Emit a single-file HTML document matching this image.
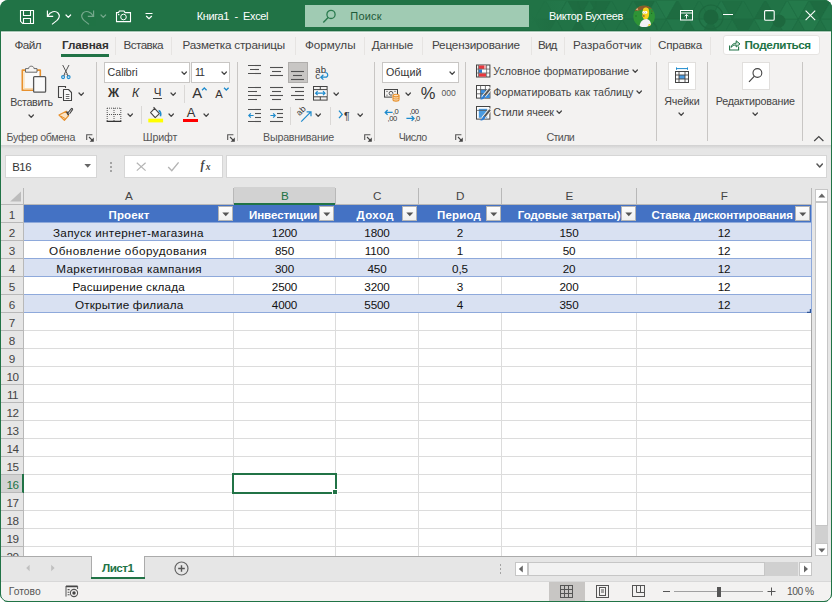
<!DOCTYPE html>
<html lang="ru"><head><meta charset="utf-8"><title>Книга1 - Excel</title>
<style>
html,body{margin:0;padding:0;background:#fff;}
body{width:832px;height:602px;overflow:hidden;position:relative;font-family:"Liberation Sans",sans-serif;}
#win{position:absolute;left:0;top:0;width:832px;height:602px;background:#f3f2f1;border-radius:8px;overflow:hidden;}
.b{position:absolute;display:block;}
.t{position:absolute;white-space:nowrap;line-height:16px;height:16px;color:#444;}

</style></head>
<body>
<div id="win">
<div class="b" style="left:0px;top:0px;width:832px;height:31px;background:#217346;"></div>
<svg class="b" style="left:530px;top:0px" width="302" height="31" viewBox="0 0 302 31" ><polygon points="-39.7,19.3 -28.700000000000003,0.0 -17.700000000000003,19.3" fill="#23774a" stroke="#1f6d42" stroke-width=".5"/><polygon points="-28.700000000000003,0.0 -6.700000000000003,0.0 -17.700000000000003,19.3" fill="#20704400" stroke="#1f6d42" stroke-width=".5"/><polygon points="-17.7,19.3 -6.699999999999999,0.0 4.300000000000001,19.3" fill="#1e6c41" stroke="#1f6d42" stroke-width=".5"/><polygon points="-6.699999999999999,0.0 15.3,0.0 4.300000000000001,19.3" fill="#20704400" stroke="#1f6d42" stroke-width=".5"/><polygon points="4.3,19.3 15.3,0.0 26.3,19.3" fill="#20704400" stroke="#1f6d42" stroke-width=".5"/><polygon points="15.3,0.0 37.3,0.0 26.3,19.3" fill="#23774a" stroke="#1f6d42" stroke-width=".5"/><polygon points="26.3,19.3 37.3,0.0 48.3,19.3" fill="#23774a" stroke="#1f6d42" stroke-width=".5"/><polygon points="37.3,0.0 59.3,0.0 48.3,19.3" fill="#1e6c41" stroke="#1f6d42" stroke-width=".5"/><polygon points="48.3,19.3 59.3,0.0 70.3,19.3" fill="#20704400" stroke="#1f6d42" stroke-width=".5"/><polygon points="59.3,0.0 81.3,0.0 70.3,19.3" fill="#1e6c41" stroke="#1f6d42" stroke-width=".5"/><polygon points="70.3,19.3 81.3,0.0 92.3,19.3" fill="#217346" stroke="#1f6d42" stroke-width=".5"/><polygon points="81.3,0.0 103.3,0.0 92.3,19.3" fill="#217346" stroke="#1f6d42" stroke-width=".5"/><polygon points="92.3,19.3 103.3,0.0 114.3,19.3" fill="#20704400" stroke="#1f6d42" stroke-width=".5"/><polygon points="103.3,0.0 125.3,0.0 114.3,19.3" fill="#1e6c41" stroke="#1f6d42" stroke-width=".5"/><polygon points="114.3,19.3 125.3,0.0 136.3,19.3" fill="#23774a" stroke="#1f6d42" stroke-width=".5"/><polygon points="125.3,0.0 147.3,0.0 136.3,19.3" fill="#247a4b" stroke="#1f6d42" stroke-width=".5"/><polygon points="136.3,19.3 147.3,0.0 158.3,19.3" fill="#1e6c41" stroke="#1f6d42" stroke-width=".5"/><polygon points="147.3,0.0 169.3,0.0 158.3,19.3" fill="#20704400" stroke="#1f6d42" stroke-width=".5"/><polygon points="158.3,19.3 169.3,0.0 180.3,19.3" fill="#217346" stroke="#1f6d42" stroke-width=".5"/><polygon points="169.3,0.0 191.3,0.0 180.3,19.3" fill="#217346" stroke="#1f6d42" stroke-width=".5"/><polygon points="180.3,19.3 191.3,0.0 202.3,19.3" fill="#23774a" stroke="#1f6d42" stroke-width=".5"/><polygon points="191.3,0.0 213.3,0.0 202.3,19.3" fill="#1f6f43" stroke="#1f6d42" stroke-width=".5"/><polygon points="202.3,19.3 213.3,0.0 224.3,19.3" fill="#217346" stroke="#1f6d42" stroke-width=".5"/><polygon points="213.3,0.0 235.3,0.0 224.3,19.3" fill="#217346" stroke="#1f6d42" stroke-width=".5"/><polygon points="224.3,19.3 235.3,0.0 246.3,19.3" fill="#1e6c41" stroke="#1f6d42" stroke-width=".5"/><polygon points="235.3,0.0 257.3,0.0 246.3,19.3" fill="#20704400" stroke="#1f6d42" stroke-width=".5"/><polygon points="246.3,19.3 257.3,0.0 268.3,19.3" fill="#247a4b" stroke="#1f6d42" stroke-width=".5"/><polygon points="257.3,0.0 279.3,0.0 268.3,19.3" fill="#247a4b" stroke="#1f6d42" stroke-width=".5"/><polygon points="268.3,19.3 279.3,0.0 290.3,19.3" fill="#217346" stroke="#1f6d42" stroke-width=".5"/><polygon points="279.3,0.0 301.3,0.0 290.3,19.3" fill="#1e6c41" stroke="#1f6d42" stroke-width=".5"/><polygon points="290.3,19.3 301.3,0.0 312.3,19.3" fill="#23774a" stroke="#1f6d42" stroke-width=".5"/><polygon points="301.3,0.0 323.3,0.0 312.3,19.3" fill="#23774a" stroke="#1f6d42" stroke-width=".5"/><polygon points="312.3,19.3 323.3,0.0 334.3,19.3" fill="#247a4b" stroke="#1f6d42" stroke-width=".5"/><polygon points="323.3,0.0 345.3,0.0 334.3,19.3" fill="#247a4b" stroke="#1f6d42" stroke-width=".5"/><polygon points="-28.7,38.6 -17.7,19.3 -6.699999999999999,38.6" fill="#1e6c41" stroke="#1f6d42" stroke-width=".5"/><polygon points="-17.7,19.3 4.300000000000001,19.3 -6.699999999999999,38.6" fill="#247a4b" stroke="#1f6d42" stroke-width=".5"/><polygon points="-6.699999999999999,38.6 4.300000000000001,19.3 15.3,38.6" fill="#217346" stroke="#1f6d42" stroke-width=".5"/><polygon points="4.300000000000001,19.3 26.3,19.3 15.3,38.6" fill="#1e6c41" stroke="#1f6d42" stroke-width=".5"/><polygon points="15.3,38.6 26.3,19.3 37.3,38.6" fill="#217346" stroke="#1f6d42" stroke-width=".5"/><polygon points="26.3,19.3 48.3,19.3 37.3,38.6" fill="#20704400" stroke="#1f6d42" stroke-width=".5"/><polygon points="37.3,38.6 48.3,19.3 59.3,38.6" fill="#1e6c41" stroke="#1f6d42" stroke-width=".5"/><polygon points="48.3,19.3 70.3,19.3 59.3,38.6" fill="#217346" stroke="#1f6d42" stroke-width=".5"/><polygon points="59.3,38.6 70.3,19.3 81.3,38.6" fill="#217346" stroke="#1f6d42" stroke-width=".5"/><polygon points="70.3,19.3 92.3,19.3 81.3,38.6" fill="#217346" stroke="#1f6d42" stroke-width=".5"/><polygon points="81.3,38.6 92.3,19.3 103.3,38.6" fill="#217346" stroke="#1f6d42" stroke-width=".5"/><polygon points="92.3,19.3 114.3,19.3 103.3,38.6" fill="#217346" stroke="#1f6d42" stroke-width=".5"/><polygon points="103.3,38.6 114.3,19.3 125.3,38.6" fill="#1e6c41" stroke="#1f6d42" stroke-width=".5"/><polygon points="114.3,19.3 136.3,19.3 125.3,38.6" fill="#217346" stroke="#1f6d42" stroke-width=".5"/><polygon points="125.3,38.6 136.3,19.3 147.3,38.6" fill="#20704400" stroke="#1f6d42" stroke-width=".5"/><polygon points="136.3,19.3 158.3,19.3 147.3,38.6" fill="#23774a" stroke="#1f6d42" stroke-width=".5"/><polygon points="147.3,38.6 158.3,19.3 169.3,38.6" fill="#1f6f43" stroke="#1f6d42" stroke-width=".5"/><polygon points="158.3,19.3 180.3,19.3 169.3,38.6" fill="#23774a" stroke="#1f6d42" stroke-width=".5"/><polygon points="169.3,38.6 180.3,19.3 191.3,38.6" fill="#1e6c41" stroke="#1f6d42" stroke-width=".5"/><polygon points="180.3,19.3 202.3,19.3 191.3,38.6" fill="#20704400" stroke="#1f6d42" stroke-width=".5"/><polygon points="191.3,38.6 202.3,19.3 213.3,38.6" fill="#217346" stroke="#1f6d42" stroke-width=".5"/><polygon points="202.3,19.3 224.3,19.3 213.3,38.6" fill="#1e6c41" stroke="#1f6d42" stroke-width=".5"/><polygon points="213.3,38.6 224.3,19.3 235.3,38.6" fill="#217346" stroke="#1f6d42" stroke-width=".5"/><polygon points="224.3,19.3 246.3,19.3 235.3,38.6" fill="#247a4b" stroke="#1f6d42" stroke-width=".5"/><polygon points="235.3,38.6 246.3,19.3 257.3,38.6" fill="#1f6f43" stroke="#1f6d42" stroke-width=".5"/><polygon points="246.3,19.3 268.3,19.3 257.3,38.6" fill="#23774a" stroke="#1f6d42" stroke-width=".5"/><polygon points="257.3,38.6 268.3,19.3 279.3,38.6" fill="#217346" stroke="#1f6d42" stroke-width=".5"/><polygon points="268.3,19.3 290.3,19.3 279.3,38.6" fill="#247a4b" stroke="#1f6d42" stroke-width=".5"/><polygon points="279.3,38.6 290.3,19.3 301.3,38.6" fill="#217346" stroke="#1f6d42" stroke-width=".5"/><polygon points="290.3,19.3 312.3,19.3 301.3,38.6" fill="#23774a" stroke="#1f6d42" stroke-width=".5"/><polygon points="301.3,38.6 312.3,19.3 323.3,38.6" fill="#247a4b" stroke="#1f6d42" stroke-width=".5"/><polygon points="312.3,19.3 334.3,19.3 323.3,38.6" fill="#1f6f43" stroke="#1f6d42" stroke-width=".5"/><polygon points="323.3,38.6 334.3,19.3 345.3,38.6" fill="#23774a" stroke="#1f6d42" stroke-width=".5"/><polygon points="334.3,19.3 356.3,19.3 345.3,38.6" fill="#1e6c41" stroke="#1f6d42" stroke-width=".5"/><circle cx="181" cy="17" r="7.5" fill="#1c663d"/><circle cx="181" cy="17" r="12" fill="none" stroke="#1d693f" stroke-width="1.2"/><circle cx="249" cy="21" r="6.5" fill="#1d683e"/><circle cx="57" cy="3" r="9" fill="none" stroke="#1e6b40" stroke-width="1.5"/><circle cx="118" cy="30" r="9" fill="none" stroke="#1e6b40" stroke-width="1.5"/><linearGradient id="fd" x1="0" x2="1" y1="0" y2="0"><stop offset="0" stop-color="#217346" stop-opacity="1"/><stop offset=".12" stop-color="#217346" stop-opacity="0"/></linearGradient><rect width="302" height="31" fill="url(#fd)"/></svg>
<div class="b" style="left:0px;top:30px;width:832px;height:1px;background:#1d6b40;"></div>
<div class="b" style="left:1px;top:31px;width:830px;height:1px;background:#a9c7b6;"></div>
<div class="b" style="left:1px;top:32px;width:830px;height:1px;background:#f9f9f8;"></div>
<div class="b" style="left:0px;top:31px;width:1px;height:571px;background:#217346;"></div>
<div class="b" style="left:831px;top:31px;width:1px;height:571px;background:#217346;"></div>
<div class="b" style="left:0px;top:601px;width:832px;height:1px;background:#217346;"></div>
<svg class="b" style="left:19px;top:9px" width="17" height="16" viewBox="0 0 17 16" ><path d="M1.5 1.5 H14.5 V14.5 H3.7 L1.5 12.3 Z" fill="none" stroke="#fff" stroke-width="1.1"/>
<path d="M4.5 1.5 V6.5 H11.5 V1.5" fill="none" stroke="#fff" stroke-width="1.1"/>
<path d="M4.5 14.5 V9.5 H11.5 V14.5" fill="none" stroke="#fff" stroke-width="1.1"/></svg>
<svg class="b" style="left:45px;top:9px" width="17" height="17" viewBox="0 0 17 17" ><path d="M2.4 1.6 V7.4 H8.2" fill="none" stroke="#fff" stroke-width="1.15"/>
<path d="M2.8 7 C5.2 2.6 10.2 1.2 13 4 C15.4 6.6 14.2 9.4 12 11.4 L7 15.4" fill="none" stroke="#fff" stroke-width="1.15"/></svg>
<svg class="b" style="left:65.2px;top:14.0px" width="6.6" height="4.4" viewBox="0 0 6.6 4.4" ><path d="M1 1 L3.3 3.4 L5.6 1" fill="none" stroke="#fff" stroke-width="1.2" stroke-linecap="round" stroke-linejoin="round"/></svg>
<svg class="b" style="left:79px;top:9px" width="17" height="17" viewBox="0 0 17 17" ><g opacity=".38"><path d="M14.6 1.6 V7.4 H8.8" fill="none" stroke="#fff" stroke-width="1.15"/>
<path d="M14.2 7 C11.8 2.6 6.8 1.2 4 4 C1.6 6.6 2.8 9.4 5 11.4 L10 15.4" fill="none" stroke="#fff" stroke-width="1.15"/></g></svg>
<svg class="b" style="left:100.2px;top:14.0px" width="6.6" height="4.4" viewBox="0 0 6.6 4.4" ><path d="M1 1 L3.3 3.4 L5.6 1" fill="none" stroke="rgba(255,255,255,.38)" stroke-width="1.2" stroke-linecap="round" stroke-linejoin="round"/></svg>
<svg class="b" style="left:115px;top:10px" width="17" height="13" viewBox="0 0 17 13" ><path d="M1.5 2.6 H3.4 L4.4 1 H9 L10 2.6 H15.5 V11.6 H1.5 Z" fill="none" stroke="#fff" stroke-width="1.1"/>
<circle cx="8.5" cy="7" r="2.8" fill="none" stroke="#fff" stroke-width="1"/><rect x="3" y="4" width="1.4" height="1.2" fill="#fff"/></svg>
<svg class="b" style="left:144px;top:12px" width="10" height="8" viewBox="0 0 10 8" ><path d="M1.5 1.5 H8.5" stroke="#fff" stroke-width="1.1"/><path d="M2.2 4 L5 6.6 L7.8 4" fill="none" stroke="#fff" stroke-width="1.2"/></svg>
<div class="t " style="top:8px;font-size:11px;color:#fff;letter-spacing:-0.376px;left:196.7px;white-space:pre;"><span id="t1">Книга1  -  Excel</span></div>
<div class="b" style="left:305px;top:5px;width:224px;height:22px;background:#a0cbb3;"></div>
<svg class="b" style="left:322px;top:9px" width="15" height="15" viewBox="0 0 15 15" ><circle cx="9" cy="5.4" r="4.1" fill="none" stroke="#2a7a4e" stroke-width="1.3"/><path d="M6.2 8.4 L1.3 13.4" stroke="#2a7a4e" stroke-width="1.4"/></svg>
<div class="t " style="top:8px;font-size:11px;color:#1e5a39;letter-spacing:0.203px;left:350.3px;"><span id="t2">Поиск</span></div>
<div class="t " style="top:8px;font-size:11px;color:#fff;letter-spacing:-0.391px;left:549px;"><span id="t3">Виктор Бухтеев</span></div>
<svg class="b" style="left:633px;top:5px" width="23" height="23" viewBox="0 0 23 23" ><defs><clipPath id="av"><circle cx="11.1" cy="11.3" r="10.8"/></clipPath></defs>
<g clip-path="url(#av)"><rect width="23" height="23" fill="#2f9436"/>
<path d="M0 0 H23 V4.6 C18 2.6 12 3.4 8 5 C5 6.2 2 5.6 0 6.4Z" fill="#8a5a2b"/>
<path d="M2 4.4 L4.4 2.6 L5.4 5.4Z" fill="#d9a77a"/>
<circle cx="3" cy="11" r=".7" fill="#1f6b25"/><circle cx="18.6" cy="8.4" r=".6" fill="#1f6b25"/><circle cx="19" cy="6" r=".5" fill="#7a3a1a"/>
<path d="M6.4 22.4 C6.6 17.6 9.4 14.2 12.6 14 C16.4 13.8 18.6 17 18 22.4Z" fill="#f1f0f4"/>
<path d="M15.4 19.4 C17 18.6 18.4 19.4 17.8 21 C17.2 22 15.8 22 15.2 21.4Z" fill="#f6cf1f"/>
<path d="M10.4 3.6 C11.4 2 14.8 2 15.6 4 C16.4 6 16.4 9.6 15.6 12 C15 13.6 13.4 14.4 12 14.2 C10.6 14 9.8 13 9.8 12 C8.8 11.6 8.6 10.4 9.6 9.6 C9.6 7.6 9.6 5.2 10.4 3.6Z" fill="#f8d21c"/>
<path d="M9.4 10.2 C10.4 9.6 11.8 10 12 11.2 C11.4 12.2 10 12.2 9.4 11.6Z" fill="#a8783a"/>
<circle cx="10.6" cy="7.4" r="1.3" fill="#fff"/><circle cx="13" cy="7.4" r="1.4" fill="#fff"/>
<circle cx="10.2" cy="7.5" r=".35" fill="#222"/><circle cx="12.6" cy="7.5" r=".35" fill="#222"/>
</g></svg>
<svg class="b" style="left:680px;top:10px" width="13" height="11" viewBox="0 0 13 11" ><rect x=".5" y=".5" width="12" height="9.5" fill="none" stroke="#fff" stroke-width="1"/><path d="M.5 3 H12.5" stroke="#fff" stroke-width="1"/>
<path d="M6.5 8.6 V4.6 M4.6 6.3 L6.5 4.4 L8.4 6.3" fill="none" stroke="#fff" stroke-width="1"/></svg>
<div class="b" style="left:723px;top:14px;width:10px;height:1px;background:#fff;"></div>
<svg class="b" style="left:764px;top:10px" width="11" height="11" viewBox="0 0 11 11" ><rect x=".6" y=".6" width="9.6" height="9.6" rx="1" fill="none" stroke="#fff" stroke-width="1.1"/></svg>
<svg class="b" style="left:805px;top:10px" width="11" height="11" viewBox="0 0 11 11" ><path d="M.6 .6 L10.2 10.2 M10.2 .6 L.6 10.2" stroke="#fff" stroke-width="1.1"/></svg>
<div class="t " style="top:37px;font-size:11.7px;letter-spacing:-0.581px;left:14.5px;"><span id="t4">Файл</span></div>
<div class="t " style="top:37px;font-size:11.7px;color:#333;font-weight:700;letter-spacing:-0.128px;left:62px;"><span id="t5">Главная</span></div>
<div class="b" style="left:61px;top:54px;width:48px;height:3px;background:#217346;"></div>
<div class="t " style="top:37px;font-size:11.7px;letter-spacing:-0.577px;left:123.5px;"><span id="t6">Вставка</span></div>
<div class="t " style="top:37px;font-size:11.7px;letter-spacing:-0.214px;left:182.5px;"><span id="t7">Разметка страницы</span></div>
<div class="t " style="top:37px;font-size:11.7px;letter-spacing:-0.055px;left:305px;"><span id="t8">Формулы</span></div>
<div class="t " style="top:37px;font-size:11.7px;letter-spacing:-0.134px;left:371.7px;"><span id="t9">Данные</span></div>
<div class="t " style="top:37px;font-size:11.7px;letter-spacing:-0.167px;left:432px;"><span id="t10">Рецензирование</span></div>
<div class="t " style="top:37px;font-size:11.7px;letter-spacing:-0.863px;left:538px;"><span id="t11">Вид</span></div>
<div class="t " style="top:37px;font-size:11.7px;letter-spacing:0.052px;left:573px;"><span id="t12">Разработчик</span></div>
<div class="t " style="top:37px;font-size:11.7px;letter-spacing:-0.286px;left:658px;"><span id="t13">Справка</span></div>
<div class="b" style="left:115px;top:37px;width:1px;height:18px;background:#e6e4e2;"></div>
<div class="b" style="left:171px;top:37px;width:1px;height:18px;background:#e6e4e2;"></div>
<div class="b" style="left:295px;top:37px;width:1px;height:18px;background:#e6e4e2;"></div>
<div class="b" style="left:364px;top:37px;width:1px;height:18px;background:#e6e4e2;"></div>
<div class="b" style="left:422px;top:37px;width:1px;height:18px;background:#e6e4e2;"></div>
<div class="b" style="left:530.5px;top:37px;width:1px;height:18px;background:#e6e4e2;"></div>
<div class="b" style="left:564px;top:37px;width:1px;height:18px;background:#e6e4e2;"></div>
<div class="b" style="left:650px;top:37px;width:1px;height:18px;background:#e6e4e2;"></div>
<div class="b" style="left:710px;top:37px;width:1px;height:18px;background:#e6e4e2;"></div>
<div class="b" style="left:723px;top:35px;width:95px;height:18px;background:#fff;border:1px solid #e6e4e2;border-radius:3px;"></div>
<svg class="b" style="left:728px;top:39px" width="14" height="13" viewBox="0 0 14 13" ><path d="M1.6 6.4 V11 H10.6 V7.6" fill="none" stroke="#217346" stroke-width="1.1"/>
<path d="M3 8.4 C3.6 5.6 5.6 4.2 8.2 4.2 V1.8 L12 4.9 L8.2 8 V6 C6 6 4.4 6.8 3 8.4Z" fill="#cfe3d7" stroke="#217346" stroke-width="1" stroke-linejoin="round"/></svg>
<div class="t " style="top:37px;font-size:11.7px;color:#217346;font-weight:700;letter-spacing:-0.395px;left:744.6px;"><span id="t14">Поделиться</span></div>
<div class="b" style="left:96px;top:62px;width:1px;height:79px;background:#c8c6c4;"></div>
<div class="b" style="left:237px;top:62px;width:1px;height:79px;background:#c8c6c4;"></div>
<div class="b" style="left:374px;top:62px;width:1px;height:79px;background:#c8c6c4;"></div>
<div class="b" style="left:465px;top:62px;width:1px;height:79px;background:#c8c6c4;"></div>
<div class="b" style="left:656px;top:62px;width:1px;height:79px;background:#c8c6c4;"></div>
<div class="b" style="left:707px;top:62px;width:1px;height:79px;background:#c8c6c4;"></div>
<div class="b" style="left:802px;top:62px;width:1px;height:79px;background:#c8c6c4;"></div>
<svg class="b" style="left:20px;top:64px" width="28" height="30" viewBox="0 0 28 30" >
<path d="M5.5 6.2 H2.4 V26.2 H13" fill="#fafafa" stroke="#e8912d" stroke-width="1.8" stroke-linejoin="round"/>
<path d="M16.5 6.2 H20.2 V12" fill="none" stroke="#e8912d" stroke-width="1.8" stroke-linejoin="round"/>
<path d="M3.3 7 H19.3 V25.3 H3.3Z" fill="#fafafa"/>
<path d="M4 7 V24.6 H13" fill="none" stroke="#fbdcae" stroke-width="1.2"/>
<path d="M5.5 8.2 V4.6 H8.6 C8.6 1.4 14 1.4 14 4.6 H17 V8.2 Z" fill="#f6f5f4" stroke="#6a6a6a" stroke-width="1" stroke-linejoin="round"/>
<rect x="13.6" y="12.6" width="12" height="15.6" rx="1" fill="#fafafa" stroke="#555" stroke-width="1.3"/></svg>
<div class="t " style="top:94px;font-size:10.7px;letter-spacing:-0.348px;left:10.3px;"><span id="t15">Вставить</span></div>
<svg class="b" style="left:27.8px;top:114.3px" width="6.4" height="4.4" viewBox="0 0 6.4 4.4" ><path d="M1 1 L3.2 3.4 L5.4 1" fill="none" stroke="#444" stroke-width="1.25" stroke-linecap="round" stroke-linejoin="round"/></svg>
<svg class="b" style="left:60px;top:64px" width="12" height="16" viewBox="0 0 12 16" ><path d="M2.7 1 L7.6 10.6 M9 1 L4.1 10.6" stroke="#555" stroke-width="1" fill="none"/>
<circle cx="3.1" cy="13.1" r="1.5" fill="#cfe6f7" stroke="#1e8bcd" stroke-width="1.1"/><circle cx="8.6" cy="13.1" r="1.5" fill="#cfe6f7" stroke="#1e8bcd" stroke-width="1.1"/>
<path d="M4 11.8 L5 10 M7.7 11.8 L6.7 10" stroke="#555" stroke-width="1"/></svg>
<svg class="b" style="left:57px;top:85px" width="17" height="17" viewBox="0 0 17 17" ><path d="M5 12.5 H1.5 V1.5 H8.5 V3" fill="none" stroke="#444" stroke-width="1.1"/>
<path d="M6.5 4.5 H11.5 L14.5 7.5 V15.5 H6.5Z" fill="#fafafa" stroke="#444" stroke-width="1.1" stroke-linejoin="round"/>
<path d="M8.8 9.5 H12.4 M8.8 11.5 H12.4 M8.8 13.5 H12.4" stroke="#444" stroke-width=".8"/></svg>
<svg class="b" style="left:78.1px;top:91.6px" width="6.4" height="4.4" viewBox="0 0 6.4 4.4" ><path d="M1 1 L3.2 3.4 L5.4 1" fill="none" stroke="#444" stroke-width="1.25" stroke-linecap="round" stroke-linejoin="round"/></svg>
<svg class="b" style="left:58px;top:107px" width="16" height="15" viewBox="0 0 16 15" ><path d="M1 8 L8.2 4.2 L10.6 8.6 L6.4 13.4 Z" fill="#fbe3c4" stroke="#e8912d" stroke-width="1.2" stroke-linejoin="round"/>
<path d="M3 9.2 L8 12" stroke="#e8912d" stroke-width="1"/>
<path d="M8.6 4.6 L10.6 8.2" stroke="#444" stroke-width="1.6"/>
<path d="M9.8 6 L13.4 1.6 C14 1 15 1.8 14.5 2.6 L11.6 6.8" fill="none" stroke="#444" stroke-width="1.1"/></svg>
<div class="t " style="top:129px;font-size:10.7px;color:#555;letter-spacing:-0.350px;left:6.6px;"><span id="t16">Буфер обмена</span></div>
<svg class="b" style="left:86px;top:133.6px" width="9" height="9" viewBox="0 0 9 9" ><path d="M.7 6 V.7 H6.4" fill="none" stroke="#555" stroke-width="1.1"/><path d="M3 3 L6.6 6.6" fill="none" stroke="#444" stroke-width="1.1"/><path d="M7.8 3.6 V7.8 H3.6Z" fill="#444"/></svg>
<div class="b" style="left:104px;top:62px;width:84px;height:19px;background:#fff;border:1px solid #c8c6c4;"></div>
<div class="t " style="top:64px;font-size:10.7px;color:#333;letter-spacing:-0.046px;left:107.6px;"><span id="t17">Calibri</span></div>
<svg class="b" style="left:180.6px;top:70.8px" width="6.4" height="4.4" viewBox="0 0 6.4 4.4" ><path d="M1 1 L3.2 3.4 L5.4 1" fill="none" stroke="#444" stroke-width="1.25" stroke-linecap="round" stroke-linejoin="round"/></svg>
<div class="b" style="left:191px;top:62px;width:37px;height:19px;background:#fff;border:1px solid #c8c6c4;"></div>
<div class="t " style="top:64px;font-size:10.7px;color:#333;letter-spacing:-1.196px;left:195px;"><span id="t18">11</span></div>
<svg class="b" style="left:221.1px;top:70.8px" width="6.4" height="4.4" viewBox="0 0 6.4 4.4" ><path d="M1 1 L3.2 3.4 L5.4 1" fill="none" stroke="#444" stroke-width="1.25" stroke-linecap="round" stroke-linejoin="round"/></svg>
<div class="t " style="top:85px;font-size:12.2px;color:#333;font-weight:700;letter-spacing:1.384px;left:108.1px;"><span id="t19">Ж</span></div>
<div class="t " style="top:85px;font-size:12.2px;color:#333;letter-spacing:0.012px;left:132px;font-style:italic;"><span id="t20">К</span></div>
<div class="t " style="top:84px;font-size:11.6px;color:#333;letter-spacing:-0.134px;left:153.8px;"><span id="t21">Ч</span></div>
<div class="b" style="left:153px;top:98.3px;width:9px;height:1px;background:#444;"></div>
<svg class="b" style="left:169.8px;top:91.6px" width="6.4" height="4.4" viewBox="0 0 6.4 4.4" ><path d="M1 1 L3.2 3.4 L5.4 1" fill="none" stroke="#444" stroke-width="1.25" stroke-linecap="round" stroke-linejoin="round"/></svg>
<div class="b" style="left:184px;top:85px;width:1px;height:18px;background:#dad8d6;"></div>
<div class="t " style="top:85px;font-size:14.8px;color:#333;letter-spacing:0.225px;left:192.2px;"><span id="t22">A</span></div>
<svg class="b" style="left:201px;top:87px" width="7" height="4" viewBox="0 0 7 4" ><path d="M1 3.2 L3.3 1 L5.6 3.2" fill="none" stroke="#1e8bcd" stroke-width="1.3"/></svg>
<div class="t " style="top:86px;font-size:11.2px;color:#333;letter-spacing:0.931px;left:215.3px;"><span id="t23">A</span></div>
<svg class="b" style="left:222.5px;top:87px" width="7" height="4" viewBox="0 0 7 4" ><path d="M1 .8 L3.3 3 L5.6 .8" fill="none" stroke="#1e8bcd" stroke-width="1.3"/></svg>
<svg class="b" style="left:106px;top:107px" width="16" height="16" viewBox="0 0 16 16" ><path d="M1 1.2 H15 M1.2 1 V14 M14.8 1 V14 M8 1 V14 M1 7.5 H15" stroke="#555" stroke-width="1" stroke-dasharray="1 1" fill="none"/>
<path d="M.6 14.4 H15.4" stroke="#333" stroke-width="1.3"/></svg>
<svg class="b" style="left:126.8px;top:113.3px" width="6.4" height="4.4" viewBox="0 0 6.4 4.4" ><path d="M1 1 L3.2 3.4 L5.4 1" fill="none" stroke="#444" stroke-width="1.25" stroke-linecap="round" stroke-linejoin="round"/></svg>
<div class="b" style="left:141px;top:106px;width:1px;height:18px;background:#dad8d6;"></div>
<svg class="b" style="left:148px;top:106px" width="16" height="18" viewBox="0 0 16 18" ><path d="M6.6 2.4 L11.4 7.6 L7.2 11.6 L2.6 6.6 Z" fill="#fafafa" stroke="#444" stroke-width="1.1" stroke-linejoin="round"/>
<path d="M6.8 2.6 L5.6 1.2" stroke="#444" stroke-width="1.1"/>
<path d="M10.6 4.6 C12.8 5.4 13.2 8 12.4 10.2" fill="none" stroke="#1e8bcd" stroke-width="1.6"/>
<rect x=".3" y="12.7" width="14.8" height="3.7" fill="#ffff00"/></svg>
<svg class="b" style="left:168.3px;top:113.3px" width="6.4" height="4.4" viewBox="0 0 6.4 4.4" ><path d="M1 1 L3.2 3.4 L5.4 1" fill="none" stroke="#444" stroke-width="1.25" stroke-linecap="round" stroke-linejoin="round"/></svg>
<div class="t " style="top:105px;font-size:13px;color:#333;letter-spacing:-0.072px;left:186.7px;"><span id="t24">A</span></div>
<div class="b" style="left:183.3px;top:118.7px;width:14.7px;height:3.7px;background:#ff0000;"></div>
<svg class="b" style="left:203.3px;top:113.3px" width="6.4" height="4.4" viewBox="0 0 6.4 4.4" ><path d="M1 1 L3.2 3.4 L5.4 1" fill="none" stroke="#444" stroke-width="1.25" stroke-linecap="round" stroke-linejoin="round"/></svg>
<div class="t " style="top:129px;font-size:10.7px;color:#555;letter-spacing:-0.172px;left:142.8px;"><span id="t25">Шрифт</span></div>
<svg class="b" style="left:226.5px;top:133.6px" width="9" height="9" viewBox="0 0 9 9" ><path d="M.7 6 V.7 H6.4" fill="none" stroke="#555" stroke-width="1.1"/><path d="M3 3 L6.6 6.6" fill="none" stroke="#444" stroke-width="1.1"/><path d="M7.8 3.6 V7.8 H3.6Z" fill="#444"/></svg>
<svg class="b" style="left:248px;top:62px" width="14" height="21" viewBox="0 0 14 21" ><path d="M0 3.5 H13" stroke="#505050" stroke-width="1.1"/><path d="M2 7.5 H11" stroke="#505050" stroke-width="1.1"/><path d="M0 11.5 H13" stroke="#505050" stroke-width="1.1"/></svg>
<svg class="b" style="left:269.6px;top:62px" width="14" height="21" viewBox="0 0 14 21" ><path d="M0 5.5 H13" stroke="#505050" stroke-width="1.1"/><path d="M2 9.5 H11" stroke="#505050" stroke-width="1.1"/><path d="M0 13.5 H13" stroke="#505050" stroke-width="1.1"/></svg>
<div class="b" style="left:288px;top:62px;width:18px;height:19px;background:#c8c6c4;border:1px solid #b0aeac;"></div>
<svg class="b" style="left:291px;top:62px" width="14" height="21" viewBox="0 0 14 21" ><path d="M0 9.5 H13" stroke="#505050" stroke-width="1.1"/><path d="M2 13.5 H11" stroke="#505050" stroke-width="1.1"/><path d="M0 17.5 H13" stroke="#505050" stroke-width="1.1"/></svg>
<div class="t " style="top:62px;font-size:9.5px;color:#333;letter-spacing:0.281px;left:315.2px;"><span id="t26">ab</span></div>
<div class="t " style="top:68px;font-size:9.5px;color:#333;letter-spacing:-0.350px;left:315.2px;"><span id="t27">c</span></div>
<svg class="b" style="left:319px;top:72px" width="10" height="8" viewBox="0 0 10 8" ><path d="M6.2 .5 C9.6 .8 9.6 5.2 6.4 5.2 H2.2 M4.4 2.8 L1.8 5.2 L4.4 7.6" fill="none" stroke="#1e8bcd" stroke-width="1.2"/></svg>
<svg class="b" style="left:248px;top:85px" width="14" height="17" viewBox="0 0 14 17" ><path d="M0 2.5 H13" stroke="#505050" stroke-width="1.1"/><path d="M0 6.5 H9" stroke="#505050" stroke-width="1.1"/><path d="M0 10.5 H13" stroke="#505050" stroke-width="1.1"/><path d="M0 14.5 H9" stroke="#505050" stroke-width="1.1"/></svg>
<svg class="b" style="left:269.6px;top:85px" width="14" height="17" viewBox="0 0 14 17" ><path d="M0 2.5 H13" stroke="#505050" stroke-width="1.1"/><path d="M2 6.5 H11" stroke="#505050" stroke-width="1.1"/><path d="M0 10.5 H13" stroke="#505050" stroke-width="1.1"/><path d="M2 14.5 H11" stroke="#505050" stroke-width="1.1"/></svg>
<svg class="b" style="left:291px;top:85px" width="14" height="17" viewBox="0 0 14 17" ><path d="M0 2.5 H13" stroke="#505050" stroke-width="1.1"/><path d="M4 6.5 H13" stroke="#505050" stroke-width="1.1"/><path d="M0 10.5 H13" stroke="#505050" stroke-width="1.1"/><path d="M4 14.5 H13" stroke="#505050" stroke-width="1.1"/></svg>
<svg class="b" style="left:313px;top:86px" width="15" height="15" viewBox="0 0 15 15" ><rect x=".5" y=".5" width="13.6" height="13.6" fill="none" stroke="#444" stroke-width="1"/>
<rect x="1" y="4" width="12.6" height="6.6" fill="#fafafa"/>
<path d="M.5 3.6 H14 M.5 10.8 H14 M7.3 .5 V3.6 M7.3 10.8 V14" stroke="#444" stroke-width="1"/>
<path d="M2.6 7.2 H12 M4.6 5.2 L2.6 7.2 L4.6 9.2 M10 5.2 L12 7.2 L10 9.2" fill="none" stroke="#1e8bcd" stroke-width="1.2"/></svg>
<svg class="b" style="left:332.6px;top:91.6px" width="6.4" height="4.4" viewBox="0 0 6.4 4.4" ><path d="M1 1 L3.2 3.4 L5.4 1" fill="none" stroke="#444" stroke-width="1.25" stroke-linecap="round" stroke-linejoin="round"/></svg>
<svg class="b" style="left:248px;top:107px" width="14" height="17" viewBox="0 0 14 17" ><path d="M0 2.5 H13" stroke="#505050" stroke-width="1.1"/><path d="M7 6.5 H13" stroke="#505050" stroke-width="1.1"/><path d="M7 10.5 H13" stroke="#505050" stroke-width="1.1"/><path d="M0 14.5 H13" stroke="#505050" stroke-width="1.1"/><path d="M.8 8.5 H5.6 M2.8 6.4 L.8 8.5 L2.8 10.6" fill="none" stroke="#1e8bcd" stroke-width="1.2"/></svg>
<svg class="b" style="left:269.6px;top:107px" width="14" height="17" viewBox="0 0 14 17" ><path d="M0 2.5 H13" stroke="#505050" stroke-width="1.1"/><path d="M7 6.5 H13" stroke="#505050" stroke-width="1.1"/><path d="M7 10.5 H13" stroke="#505050" stroke-width="1.1"/><path d="M0 14.5 H13" stroke="#505050" stroke-width="1.1"/><path d="M.4 8.5 H5.2 M3.2 6.4 L5.2 8.5 L3.2 10.6" fill="none" stroke="#1e8bcd" stroke-width="1.2"/></svg>
<div class="b" style="left:290px;top:107px;width:1px;height:18px;background:#dad8d6;"></div>
<svg class="b" style="left:296px;top:105px" width="17" height="18" viewBox="0 0 17 18" ><text x="0" y="0" transform="translate(3.6,11.2) rotate(-45)" font-size="8.6" fill="#333" font-family="Liberation Sans, sans-serif">ab</text>
<path d="M5.2 16.6 L14.6 7.2 M10.6 6.8 H15 V11.2" fill="none" stroke="#1e8bcd" stroke-width="1.2"/></svg>
<svg class="b" style="left:314.6px;top:113.3px" width="6.4" height="4.4" viewBox="0 0 6.4 4.4" ><path d="M1 1 L3.2 3.4 L5.4 1" fill="none" stroke="#444" stroke-width="1.25" stroke-linecap="round" stroke-linejoin="round"/></svg>
<div class="b" style="left:330px;top:107px;width:1px;height:18px;background:#dad8d6;"></div>
<svg class="b" style="left:338px;top:109px" width="14" height="12" viewBox="0 0 14 12" ><path d="M1 1.6 L4.2 5.4 L1 9.2" fill="none" stroke="#1e8bcd" stroke-width="1.3"/></svg>
<div class="t " style="top:108px;font-size:10.5px;color:#333;letter-spacing:0.759px;left:344px;"><span id="t28">¶</span></div>
<svg class="b" style="left:357.1px;top:113.3px" width="6.4" height="4.4" viewBox="0 0 6.4 4.4" ><path d="M1 1 L3.2 3.4 L5.4 1" fill="none" stroke="#444" stroke-width="1.25" stroke-linecap="round" stroke-linejoin="round"/></svg>
<div class="t " style="top:129px;font-size:10.7px;color:#555;letter-spacing:-0.207px;left:263px;"><span id="t29">Выравнивание</span></div>
<svg class="b" style="left:364px;top:133.6px" width="9" height="9" viewBox="0 0 9 9" ><path d="M.7 6 V.7 H6.4" fill="none" stroke="#555" stroke-width="1.1"/><path d="M3 3 L6.6 6.6" fill="none" stroke="#444" stroke-width="1.1"/><path d="M7.8 3.6 V7.8 H3.6Z" fill="#444"/></svg>
<div class="b" style="left:382px;top:62px;width:75px;height:19px;background:#fff;border:1px solid #c8c6c4;"></div>
<div class="t " style="top:64px;font-size:10.7px;color:#333;letter-spacing:0.095px;left:385.9px;"><span id="t30">Общий</span></div>
<svg class="b" style="left:449.3px;top:70.8px" width="6.4" height="4.4" viewBox="0 0 6.4 4.4" ><path d="M1 1 L3.2 3.4 L5.4 1" fill="none" stroke="#444" stroke-width="1.25" stroke-linecap="round" stroke-linejoin="round"/></svg>
<svg class="b" style="left:384px;top:89px" width="17" height="13" viewBox="0 0 17 13" ><rect x=".5" y=".5" width="13" height="7.6" fill="none" stroke="#444" stroke-width="1"/>
<circle cx="7" cy="4.3" r="1.9" fill="none" stroke="#444" stroke-width=".9"/><path d="M2.4 2.4 H3.6 M10.4 2.4 H11.6 M2.4 6.2 H3.6" stroke="#444" stroke-width=".9"/>
<rect x="8.2" y="5.2" width="7.4" height="7" fill="#f3f2f1"/>
<path d="M9 6.6 V10.8 C9 12.6 15 12.6 15 10.8 V6.6" fill="#fbe3c4" stroke="#e8912d" stroke-width="1.1"/>
<ellipse cx="12" cy="6.6" rx="3" ry="1.3" fill="#fbe3c4" stroke="#e8912d" stroke-width="1.1"/><path d="M9 8.8 C9 10.4 15 10.4 15 8.8" fill="none" stroke="#e8912d" stroke-width="1"/></svg>
<svg class="b" style="left:405.0px;top:91.6px" width="6.4" height="4.4" viewBox="0 0 6.4 4.4" ><path d="M1 1 L3.2 3.4 L5.4 1" fill="none" stroke="#444" stroke-width="1.25" stroke-linecap="round" stroke-linejoin="round"/></svg>
<div class="t " style="top:85px;font-size:16.5px;color:#333;letter-spacing:-1.372px;left:420.7px;"><span id="t31">%</span></div>
<div class="t " style="top:85px;font-size:8.6px;color:#555;letter-spacing:-0.058px;left:441.6px;"><span id="t32">000</span></div>
<svg class="b" style="left:384px;top:107px" width="16" height="16" viewBox="0 0 16 16" ><path d="M1.2 5.4 H8.6 M3.6 3 L1.2 5.4 L3.6 7.8" fill="none" stroke="#1e8bcd" stroke-width="1.3"/>
<text x="8.8" y="6.9" font-size="7.6" fill="#333" font-family="Liberation Sans, sans-serif" letter-spacing="-.5">,0</text>
<text x="3.6" y="14.4" font-size="7.6" fill="#333" font-family="Liberation Sans, sans-serif" letter-spacing="-.5">,00</text></svg>
<svg class="b" style="left:405px;top:107px" width="17" height="16" viewBox="0 0 17 16" ><text x="4.4" y="6.9" font-size="7.6" fill="#333" font-family="Liberation Sans, sans-serif" letter-spacing="-.5">,00</text>
<path d="M1.4 11.4 H9 M6.6 9 L9 11.4 L6.6 13.8" fill="none" stroke="#1e8bcd" stroke-width="1.3"/>
<text x="9.4" y="14.4" font-size="7.6" fill="#333" font-family="Liberation Sans, sans-serif" letter-spacing="-.5">,0</text></svg>
<div class="t " style="top:129px;font-size:10.7px;color:#555;letter-spacing:-0.567px;left:398.8px;"><span id="t33">Число</span></div>
<svg class="b" style="left:455px;top:133.6px" width="9" height="9" viewBox="0 0 9 9" ><path d="M.7 6 V.7 H6.4" fill="none" stroke="#555" stroke-width="1.1"/><path d="M3 3 L6.6 6.6" fill="none" stroke="#444" stroke-width="1.1"/><path d="M7.8 3.6 V7.8 H3.6Z" fill="#444"/></svg>
<svg class="b" style="left:476px;top:64px" width="15" height="14" viewBox="0 0 15 14" ><rect x=".5" y="1" width="13.4" height="12" fill="#fdfdfd" stroke="#444" stroke-width="1"/>
<rect x="2.6" y="1.5" width="5.4" height="3.4" fill="#e8373e"/><rect x="8" y="1.5" width="2.4" height="3.4" fill="#f4a3a6"/>
<rect x="2.6" y="5.4" width="3.4" height="3.4" fill="#2b7cd3"/>
<rect x="2.6" y="9.3" width="7.4" height="3.3" fill="#e8373e"/>
<path d="M.5 5.1 H14 M.5 9 H14 M2.4 1 V13 M10.6 1 V13" stroke="#555" stroke-width=".7"/></svg>
<div class="t " style="top:63px;font-size:10.7px;letter-spacing:0.001px;left:493.3px;"><span id="t34">Условное форматирование</span></div>
<svg class="b" style="left:632.4px;top:68.8px" width="6.4" height="4.4" viewBox="0 0 6.4 4.4" ><path d="M1 1 L3.2 3.4 L5.4 1" fill="none" stroke="#444" stroke-width="1.25" stroke-linecap="round" stroke-linejoin="round"/></svg>
<svg class="b" style="left:476px;top:85px" width="16" height="15" viewBox="0 0 16 15" ><rect x=".5" y=".5" width="13.4" height="12.6" fill="#fdfdfd" stroke="#444" stroke-width="1"/>
<rect x="4.6" y="4.6" width="9" height="8.4" fill="#3a8ee0"/>
<path d="M.5 4.6 H14 M.5 8.8 H14 M4.6 .5 V13 M9.4 .5 V13" stroke="#555" stroke-width=".8"/>
<path d="M13.8 4.2 L7.6 11.4" stroke="#f3f2f1" stroke-width="3.8" stroke-linecap="round"/>
<path d="M13.6 4.4 L8.2 10.8" stroke="#555" stroke-width="2" stroke-linecap="round"/>
<path d="M8.6 10 C7.6 10 6.6 11 6.2 12 C5.8 13.2 4.8 13.8 3.6 14 C5.2 14.8 7.6 14.4 8.6 13 C9.4 12 9.6 10.8 8.6 10Z" fill="#2b7cd3"/></svg>
<div class="t " style="top:84px;font-size:10.7px;letter-spacing:0.046px;left:493.3px;"><span id="t35">Форматировать как таблицу</span></div>
<svg class="b" style="left:636.0px;top:89.8px" width="6.4" height="4.4" viewBox="0 0 6.4 4.4" ><path d="M1 1 L3.2 3.4 L5.4 1" fill="none" stroke="#444" stroke-width="1.25" stroke-linecap="round" stroke-linejoin="round"/></svg>
<svg class="b" style="left:476px;top:106px" width="16" height="15" viewBox="0 0 16 15" ><rect x=".5" y=".5" width="13.4" height="12.6" fill="#fdfdfd" stroke="#444" stroke-width="1"/>
<rect x="2.8" y="2.8" width="8.4" height="9" fill="#4a9be0"/>
<path d="M.5 4.4 H14" stroke="#555" stroke-width=".8"/>
<path d="M13.8 4.2 L7.6 11.4" stroke="#f3f2f1" stroke-width="3.8" stroke-linecap="round"/>
<path d="M13.6 4.4 L8.2 10.8" stroke="#555" stroke-width="2" stroke-linecap="round"/>
<path d="M8.6 10 C7.6 10 6.6 11 6.2 12 C5.8 13.2 4.8 13.8 3.6 14 C5.2 14.8 7.6 14.4 8.6 13 C9.4 12 9.6 10.8 8.6 10Z" fill="#2b7cd3"/></svg>
<div class="t " style="top:104px;font-size:10.7px;letter-spacing:-0.094px;left:493.3px;"><span id="t36">Стили ячеек</span></div>
<svg class="b" style="left:556.3px;top:110.2px" width="6.4" height="4.4" viewBox="0 0 6.4 4.4" ><path d="M1 1 L3.2 3.4 L5.4 1" fill="none" stroke="#444" stroke-width="1.25" stroke-linecap="round" stroke-linejoin="round"/></svg>
<div class="t " style="top:129px;font-size:10.7px;color:#555;letter-spacing:-0.644px;left:546.5px;"><span id="t37">Стили</span></div>
<div class="b" style="left:668px;top:62px;width:26px;height:26px;background:#fff;border:1px solid #e1dfdd;"></div>
<svg class="b" style="left:674px;top:67px" width="17" height="17" viewBox="0 0 17 17" ><path d="M2.5 1.6 H13.5 M2.5 .4 V2.8 M13.5 .4 V2.8" stroke="#1e8bcd" stroke-width="1"/>
<rect x="1.5" y="4.5" width="13" height="11" fill="#fafafa" stroke="#444" stroke-width="1"/>
<rect x="5" y="8" width="6" height="4" fill="#4a9be0"/>
<path d="M1.5 8 H14.5 M1.5 12 H14.5 M5 4.5 V15.5 M11 4.5 V15.5" stroke="#444" stroke-width=".9"/></svg>
<div class="t " style="top:93px;font-size:10.7px;letter-spacing:-0.084px;left:664.2px;"><span id="t38">Ячейки</span></div>
<svg class="b" style="left:678.1px;top:112.3px" width="6.4" height="4.4" viewBox="0 0 6.4 4.4" ><path d="M1 1 L3.2 3.4 L5.4 1" fill="none" stroke="#444" stroke-width="1.25" stroke-linecap="round" stroke-linejoin="round"/></svg>
<div class="b" style="left:742px;top:62px;width:26px;height:26px;background:#fff;border:1px solid #e1dfdd;"></div>
<svg class="b" style="left:748px;top:67px" width="16" height="17" viewBox="0 0 16 17" ><circle cx="9.4" cy="6" r="4.4" fill="none" stroke="#444" stroke-width="1.1"/><path d="M6.2 9.4 L1 14.8" stroke="#444" stroke-width="1.2"/></svg>
<div class="t " style="top:93px;font-size:10.7px;letter-spacing:-0.157px;left:715.7px;"><span id="t39">Редактирование</span></div>
<svg class="b" style="left:752.0px;top:112.3px" width="6.4" height="4.4" viewBox="0 0 6.4 4.4" ><path d="M1 1 L3.2 3.4 L5.4 1" fill="none" stroke="#444" stroke-width="1.25" stroke-linecap="round" stroke-linejoin="round"/></svg>
<svg class="b" style="left:813px;top:135px" width="12" height="8" viewBox="0 0 12 8" ><path d="M1.2 6 L5.8 1.6 L10.4 6" fill="none" stroke="#444" stroke-width="1.2"/></svg>
<div class="b" style="left:1px;top:145px;width:830px;height:4px;background:linear-gradient(#d0d0d0,#e6e6e6);"></div>
<div class="b" style="left:1px;top:149px;width:830px;height:433px;background:#e6e6e6;"></div>
<div class="b" style="left:5px;top:155px;width:90px;height:21px;background:#fff;border:1px solid #d6d6d6;"></div>
<div class="t " style="top:159px;font-size:11.4px;color:#333;letter-spacing:-0.433px;left:12.2px;"><span id="t40">B16</span></div>
<svg class="b" style="left:84px;top:163px" width="8" height="6" viewBox="0 0 8 6" ><path d="M.4 .9 H7 L3.7 4.8Z" fill="#666"/></svg>
<div class="b" style="left:110px;top:162px;width:1.5px;height:1.5px;background:#a4a4a4;"></div>
<div class="b" style="left:110px;top:166px;width:1.5px;height:1.5px;background:#a4a4a4;"></div>
<div class="b" style="left:110px;top:170px;width:1.5px;height:1.5px;background:#a4a4a4;"></div>
<div class="b" style="left:124px;top:155px;width:97px;height:21px;background:#fff;border:1px solid #d6d6d6;"></div>
<svg class="b" style="left:136px;top:162px" width="11" height="10" viewBox="0 0 11 10" ><path d="M.8 .8 L9.6 8.6 M9.6 .8 L.8 8.6" stroke="#b4b4b4" stroke-width="1.2"/></svg>
<svg class="b" style="left:167px;top:161px" width="13" height="11" viewBox="0 0 13 11" ><path d="M1.2 6 L4.8 9.8 L11.6 1.4" fill="none" stroke="#b4b4b4" stroke-width="1.4"/></svg>
<div class="t " style="top:157px;font-size:11.5px;font-weight:700;letter-spacing:2.156px;left:200.6px;font-family:'Liberation Serif',serif;font-style:italic;"><span id="t41">f</span></div>
<div class="t " style="top:159px;font-size:9.5px;font-weight:700;letter-spacing:0.450px;left:205.8px;font-family:'Liberation Serif',serif;font-style:italic;"><span id="t42">x</span></div>
<div class="b" style="left:226px;top:155px;width:599px;height:21px;background:#fff;border:1px solid #d6d6d6;"></div>
<svg class="b" style="left:815.9px;top:163.1px" width="7.4" height="5" viewBox="0 0 7.4 5" ><path d="M1 1 L3.7 4 L6.4 1" fill="none" stroke="#555" stroke-width="1.5" stroke-linecap="round" stroke-linejoin="round"/></svg>
<div class="b" style="left:24px;top:205px;width:788px;height:352px;background:#fff;"></div>
<div class="b" style="left:234px;top:187px;width:101px;height:17px;background:#d2d2d2;"></div>
<div class="b" style="left:233px;top:203px;width:103px;height:2px;background:#217346;"></div>
<div class="b" style="left:1px;top:204px;width:233px;height:1px;background:#b8b8b8;"></div>
<div class="b" style="left:336px;top:204px;width:476px;height:1px;background:#b8b8b8;"></div>
<div class="b" style="left:23px;top:188px;width:1px;height:17px;background:#b8b8b8;"></div>
<div class="b" style="left:233px;top:188px;width:1px;height:17px;background:#b8b8b8;"></div>
<div class="b" style="left:335px;top:188px;width:1px;height:17px;background:#b8b8b8;"></div>
<div class="b" style="left:418px;top:188px;width:1px;height:17px;background:#b8b8b8;"></div>
<div class="b" style="left:501px;top:188px;width:1px;height:17px;background:#b8b8b8;"></div>
<div class="b" style="left:636px;top:188px;width:1px;height:17px;background:#b8b8b8;"></div>
<div class="b" style="left:811px;top:188px;width:1px;height:17px;background:#b8b8b8;"></div>
<svg class="b" style="left:9px;top:190px" width="13" height="13" viewBox="0 0 13 13" ><path d="M12 1.4 V11.6 H1.2Z" fill="#bcbcbc"/></svg>
<div class="t " style="top:188px;font-size:11.7px;left:-21.19999999999999px;width:300px;text-align:center;"><span id="t43">A</span></div>
<div class="t " style="top:188px;font-size:11.7px;color:#217346;left:134.8px;width:300px;text-align:center;"><span id="t44">B</span></div>
<div class="t " style="top:188px;font-size:11.7px;left:227.3px;width:300px;text-align:center;"><span id="t45">C</span></div>
<div class="t " style="top:188px;font-size:11.7px;left:310.3px;width:300px;text-align:center;"><span id="t46">D</span></div>
<div class="t " style="top:188px;font-size:11.7px;left:419.29999999999995px;width:300px;text-align:center;"><span id="t47">E</span></div>
<div class="t " style="top:188px;font-size:11.7px;left:574.3px;width:300px;text-align:center;"><span id="t48">F</span></div>
<div class="b" style="left:1px;top:222px;width:23px;height:1px;background:#b8b8b8;"></div>
<div class="t " style="top:207px;font-size:11.7px;left:-138.4px;width:300px;text-align:center;letter-spacing:-.6px;"><span id="t49">1</span></div>
<div class="b" style="left:1px;top:240px;width:23px;height:1px;background:#b8b8b8;"></div>
<div class="t " style="top:225px;font-size:11.7px;left:-138.4px;width:300px;text-align:center;letter-spacing:-.6px;"><span id="t50">2</span></div>
<div class="b" style="left:1px;top:258px;width:23px;height:1px;background:#b8b8b8;"></div>
<div class="t " style="top:243px;font-size:11.7px;left:-138.4px;width:300px;text-align:center;letter-spacing:-.6px;"><span id="t51">3</span></div>
<div class="b" style="left:1px;top:276px;width:23px;height:1px;background:#b8b8b8;"></div>
<div class="t " style="top:261px;font-size:11.7px;left:-138.4px;width:300px;text-align:center;letter-spacing:-.6px;"><span id="t52">4</span></div>
<div class="b" style="left:1px;top:294px;width:23px;height:1px;background:#b8b8b8;"></div>
<div class="t " style="top:279px;font-size:11.7px;left:-138.4px;width:300px;text-align:center;letter-spacing:-.6px;"><span id="t53">5</span></div>
<div class="b" style="left:1px;top:312px;width:23px;height:1px;background:#b8b8b8;"></div>
<div class="t " style="top:297px;font-size:11.7px;left:-138.4px;width:300px;text-align:center;letter-spacing:-.6px;"><span id="t54">6</span></div>
<div class="b" style="left:1px;top:330px;width:23px;height:1px;background:#b8b8b8;"></div>
<div class="t " style="top:315px;font-size:11.7px;left:-138.4px;width:300px;text-align:center;letter-spacing:-.6px;"><span id="t55">7</span></div>
<div class="b" style="left:1px;top:348px;width:23px;height:1px;background:#b8b8b8;"></div>
<div class="t " style="top:333px;font-size:11.7px;left:-138.4px;width:300px;text-align:center;letter-spacing:-.6px;"><span id="t56">8</span></div>
<div class="b" style="left:1px;top:366px;width:23px;height:1px;background:#b8b8b8;"></div>
<div class="t " style="top:351px;font-size:11.7px;left:-138.4px;width:300px;text-align:center;letter-spacing:-.6px;"><span id="t57">9</span></div>
<div class="b" style="left:1px;top:384px;width:23px;height:1px;background:#b8b8b8;"></div>
<div class="t " style="top:369px;font-size:11.7px;left:-137.6px;width:300px;text-align:center;letter-spacing:-.6px;"><span id="t58">10</span></div>
<div class="b" style="left:1px;top:402px;width:23px;height:1px;background:#b8b8b8;"></div>
<div class="t " style="top:387px;font-size:11.7px;left:-137.6px;width:300px;text-align:center;letter-spacing:-.6px;"><span id="t59">11</span></div>
<div class="b" style="left:1px;top:420px;width:23px;height:1px;background:#b8b8b8;"></div>
<div class="t " style="top:405px;font-size:11.7px;left:-137.6px;width:300px;text-align:center;letter-spacing:-.6px;"><span id="t60">12</span></div>
<div class="b" style="left:1px;top:438px;width:23px;height:1px;background:#b8b8b8;"></div>
<div class="t " style="top:423px;font-size:11.7px;left:-137.6px;width:300px;text-align:center;letter-spacing:-.6px;"><span id="t61">13</span></div>
<div class="b" style="left:1px;top:456px;width:23px;height:1px;background:#b8b8b8;"></div>
<div class="t " style="top:441px;font-size:11.7px;left:-137.6px;width:300px;text-align:center;letter-spacing:-.6px;"><span id="t62">14</span></div>
<div class="b" style="left:1px;top:474px;width:23px;height:1px;background:#b8b8b8;"></div>
<div class="t " style="top:459px;font-size:11.7px;left:-137.6px;width:300px;text-align:center;letter-spacing:-.6px;"><span id="t63">15</span></div>
<div class="b" style="left:1px;top:475px;width:22px;height:17px;background:#d2d2d2;"></div>
<div class="b" style="left:22px;top:474px;width:2px;height:19px;background:#217346;"></div>
<div class="b" style="left:1px;top:492px;width:23px;height:1px;background:#b8b8b8;"></div>
<div class="t " style="top:477px;font-size:11.7px;color:#217346;left:-137.6px;width:300px;text-align:center;letter-spacing:-.6px;"><span id="t64">16</span></div>
<div class="b" style="left:1px;top:510px;width:23px;height:1px;background:#b8b8b8;"></div>
<div class="t " style="top:495px;font-size:11.7px;left:-137.6px;width:300px;text-align:center;letter-spacing:-.6px;"><span id="t65">17</span></div>
<div class="b" style="left:1px;top:528px;width:23px;height:1px;background:#b8b8b8;"></div>
<div class="t " style="top:513px;font-size:11.7px;left:-137.6px;width:300px;text-align:center;letter-spacing:-.6px;"><span id="t66">18</span></div>
<div class="b" style="left:1px;top:546px;width:23px;height:1px;background:#b8b8b8;"></div>
<div class="t " style="top:531px;font-size:11.7px;left:-137.6px;width:300px;text-align:center;letter-spacing:-.6px;"><span id="t67">19</span></div>
<div class="b" style="left:1px;top:564px;width:23px;height:1px;background:#b8b8b8;"></div>
<div class="t " style="top:549px;font-size:11.7px;left:-137.6px;width:300px;text-align:center;letter-spacing:-.6px;"><span id="t68">20</span></div>
<div class="b" style="left:23px;top:205px;width:1px;height:352px;background:#b8b8b8;"></div>
<div class="b" style="left:23px;top:474px;width:1px;height:19px;background:#217346;"></div>
<div class="b" style="left:22px;top:474px;width:1px;height:19px;background:rgba(33,115,70,.45);"></div>
<div class="b" style="left:24px;top:222px;width:788px;height:1px;background:#dcdcdc;"></div>
<div class="b" style="left:24px;top:240px;width:788px;height:1px;background:#dcdcdc;"></div>
<div class="b" style="left:24px;top:258px;width:788px;height:1px;background:#dcdcdc;"></div>
<div class="b" style="left:24px;top:276px;width:788px;height:1px;background:#dcdcdc;"></div>
<div class="b" style="left:24px;top:294px;width:788px;height:1px;background:#dcdcdc;"></div>
<div class="b" style="left:24px;top:312px;width:788px;height:1px;background:#dcdcdc;"></div>
<div class="b" style="left:24px;top:330px;width:788px;height:1px;background:#dcdcdc;"></div>
<div class="b" style="left:24px;top:348px;width:788px;height:1px;background:#dcdcdc;"></div>
<div class="b" style="left:24px;top:366px;width:788px;height:1px;background:#dcdcdc;"></div>
<div class="b" style="left:24px;top:384px;width:788px;height:1px;background:#dcdcdc;"></div>
<div class="b" style="left:24px;top:402px;width:788px;height:1px;background:#dcdcdc;"></div>
<div class="b" style="left:24px;top:420px;width:788px;height:1px;background:#dcdcdc;"></div>
<div class="b" style="left:24px;top:438px;width:788px;height:1px;background:#dcdcdc;"></div>
<div class="b" style="left:24px;top:456px;width:788px;height:1px;background:#dcdcdc;"></div>
<div class="b" style="left:24px;top:474px;width:788px;height:1px;background:#dcdcdc;"></div>
<div class="b" style="left:24px;top:492px;width:788px;height:1px;background:#dcdcdc;"></div>
<div class="b" style="left:24px;top:510px;width:788px;height:1px;background:#dcdcdc;"></div>
<div class="b" style="left:24px;top:528px;width:788px;height:1px;background:#dcdcdc;"></div>
<div class="b" style="left:24px;top:546px;width:788px;height:1px;background:#dcdcdc;"></div>
<div class="b" style="left:24px;top:564px;width:788px;height:1px;background:#dcdcdc;"></div>
<div class="b" style="left:233px;top:205px;width:1px;height:352px;background:#dcdcdc;"></div>
<div class="b" style="left:335px;top:205px;width:1px;height:352px;background:#dcdcdc;"></div>
<div class="b" style="left:418px;top:205px;width:1px;height:352px;background:#dcdcdc;"></div>
<div class="b" style="left:501px;top:205px;width:1px;height:352px;background:#dcdcdc;"></div>
<div class="b" style="left:636px;top:205px;width:1px;height:352px;background:#dcdcdc;"></div>
<div class="b" style="left:811px;top:205px;width:1px;height:352px;background:#dcdcdc;"></div>
<div class="b" style="left:24px;top:205px;width:788px;height:18px;background:#4472c4;"></div>
<div class="b" style="left:24px;top:223px;width:788px;height:17px;background:#d9e1f2;"></div>
<div class="b" style="left:24px;top:259px;width:788px;height:17px;background:#d9e1f2;"></div>
<div class="b" style="left:24px;top:295px;width:788px;height:17px;background:#d9e1f2;"></div>
<div class="b" style="left:24px;top:222px;width:788px;height:1px;background:#8ea9db;"></div>
<div class="b" style="left:24px;top:240px;width:788px;height:1px;background:#8ea9db;"></div>
<div class="b" style="left:24px;top:258px;width:788px;height:1px;background:#8ea9db;"></div>
<div class="b" style="left:24px;top:276px;width:788px;height:1px;background:#8ea9db;"></div>
<div class="b" style="left:24px;top:294px;width:788px;height:1px;background:#8ea9db;"></div>
<div class="b" style="left:24px;top:312px;width:788px;height:1px;background:#8ea9db;"></div>
<div class="b" style="left:811px;top:205px;width:1px;height:108px;background:#8ea9db;"></div>
<div class="t " style="top:207px;font-size:11.5px;color:#fff;font-weight:700;letter-spacing:0.162px;left:108.5px;"><span id="t69">Проект</span></div>
<div class="t " style="top:207px;font-size:11.5px;color:#fff;font-weight:700;letter-spacing:-0.051px;left:249px;"><span id="t70">Инвестиции</span></div>
<div class="t " style="top:207px;font-size:11.5px;color:#fff;font-weight:700;letter-spacing:0.453px;left:356.4px;"><span id="t71">Доход</span></div>
<div class="t " style="top:207px;font-size:11.5px;color:#fff;font-weight:700;letter-spacing:0.193px;left:437px;"><span id="t72">Период</span></div>
<div class="t " style="top:207px;font-size:11.5px;color:#fff;font-weight:700;letter-spacing:-0.072px;left:517.8px;"><span id="t73">Годовые затраты)</span></div>
<div class="t " style="top:207px;font-size:11.5px;color:#fff;font-weight:700;letter-spacing:-0.120px;left:651.5px;"><span id="t74">Ставка дисконтирования</span></div>
<div class="b" style="left:218px;top:206px;width:14px;height:14px;background:linear-gradient(#fdfdfd,#f0f0f0);border:1px solid #b4b4b4;box-sizing:border-box;width:15px;height:15px;"></div>
<svg class="b" style="left:222px;top:212px" width="8" height="5" viewBox="0 0 8 5" ><path d="M.3 .5 H7.3 L3.8 4.2Z" fill="#555"/></svg>
<div class="b" style="left:319px;top:206px;width:14px;height:14px;background:linear-gradient(#fdfdfd,#f0f0f0);border:1px solid #b4b4b4;box-sizing:border-box;width:15px;height:15px;"></div>
<svg class="b" style="left:323px;top:212px" width="8" height="5" viewBox="0 0 8 5" ><path d="M.3 .5 H7.3 L3.8 4.2Z" fill="#555"/></svg>
<div class="b" style="left:402px;top:206px;width:14px;height:14px;background:linear-gradient(#fdfdfd,#f0f0f0);border:1px solid #b4b4b4;box-sizing:border-box;width:15px;height:15px;"></div>
<svg class="b" style="left:406px;top:212px" width="8" height="5" viewBox="0 0 8 5" ><path d="M.3 .5 H7.3 L3.8 4.2Z" fill="#555"/></svg>
<div class="b" style="left:486px;top:206px;width:14px;height:14px;background:linear-gradient(#fdfdfd,#f0f0f0);border:1px solid #b4b4b4;box-sizing:border-box;width:15px;height:15px;"></div>
<svg class="b" style="left:490px;top:212px" width="8" height="5" viewBox="0 0 8 5" ><path d="M.3 .5 H7.3 L3.8 4.2Z" fill="#555"/></svg>
<div class="b" style="left:621px;top:206px;width:14px;height:14px;background:linear-gradient(#fdfdfd,#f0f0f0);border:1px solid #b4b4b4;box-sizing:border-box;width:15px;height:15px;"></div>
<svg class="b" style="left:625px;top:212px" width="8" height="5" viewBox="0 0 8 5" ><path d="M.3 .5 H7.3 L3.8 4.2Z" fill="#555"/></svg>
<div class="b" style="left:795px;top:206px;width:14px;height:14px;background:linear-gradient(#fdfdfd,#f0f0f0);border:1px solid #b4b4b4;box-sizing:border-box;width:15px;height:15px;"></div>
<svg class="b" style="left:799px;top:212px" width="8" height="5" viewBox="0 0 8 5" ><path d="M.3 .5 H7.3 L3.8 4.2Z" fill="#555"/></svg>
<div class="t " style="top:225px;font-size:11.7px;color:#111;letter-spacing:0.346px;left:-21.650000000000006px;width:300px;text-align:center;"><span id="t75">Запуск интернет-магазина</span></div>
<div class="t " style="top:225px;font-size:11.7px;color:#111;left:134.5px;width:300px;text-align:center;letter-spacing:-.15px;"><span id="t76">1200</span></div>
<div class="t " style="top:225px;font-size:11.7px;color:#111;left:227.0px;width:300px;text-align:center;letter-spacing:-.15px;"><span id="t77">1800</span></div>
<div class="t " style="top:225px;font-size:11.7px;color:#111;left:310.0px;width:300px;text-align:center;letter-spacing:-.15px;"><span id="t78">2</span></div>
<div class="t " style="top:225px;font-size:11.7px;color:#111;left:419.0px;width:300px;text-align:center;letter-spacing:-.15px;"><span id="t79">150</span></div>
<div class="t " style="top:225px;font-size:11.7px;color:#111;left:574.0px;width:300px;text-align:center;letter-spacing:-.15px;"><span id="t80">12</span></div>
<div class="t " style="top:243px;font-size:11.7px;color:#111;letter-spacing:0.459px;left:-21.900000000000006px;width:300px;text-align:center;"><span id="t81">Обновление оборудования</span></div>
<div class="t " style="top:243px;font-size:11.7px;color:#111;left:134.5px;width:300px;text-align:center;letter-spacing:-.15px;"><span id="t82">850</span></div>
<div class="t " style="top:243px;font-size:11.7px;color:#111;left:227.0px;width:300px;text-align:center;letter-spacing:-.15px;"><span id="t83">1100</span></div>
<div class="t " style="top:243px;font-size:11.7px;color:#111;left:310.0px;width:300px;text-align:center;letter-spacing:-.15px;"><span id="t84">1</span></div>
<div class="t " style="top:243px;font-size:11.7px;color:#111;left:419.0px;width:300px;text-align:center;letter-spacing:-.15px;"><span id="t85">50</span></div>
<div class="t " style="top:243px;font-size:11.7px;color:#111;left:574.0px;width:300px;text-align:center;letter-spacing:-.15px;"><span id="t86">12</span></div>
<div class="t " style="top:261px;font-size:11.7px;color:#111;letter-spacing:0.392px;left:-20.849999999999994px;width:300px;text-align:center;"><span id="t87">Маркетинговая кампания</span></div>
<div class="t " style="top:261px;font-size:11.7px;color:#111;left:134.5px;width:300px;text-align:center;letter-spacing:-.15px;"><span id="t88">300</span></div>
<div class="t " style="top:261px;font-size:11.7px;color:#111;left:227.0px;width:300px;text-align:center;letter-spacing:-.15px;"><span id="t89">450</span></div>
<div class="t " style="top:261px;font-size:11.7px;color:#111;left:310.0px;width:300px;text-align:center;letter-spacing:-.15px;"><span id="t90">0,5</span></div>
<div class="t " style="top:261px;font-size:11.7px;color:#111;left:419.0px;width:300px;text-align:center;letter-spacing:-.15px;"><span id="t91">20</span></div>
<div class="t " style="top:261px;font-size:11.7px;color:#111;left:574.0px;width:300px;text-align:center;letter-spacing:-.15px;"><span id="t92">12</span></div>
<div class="t " style="top:279px;font-size:11.7px;color:#111;letter-spacing:0.205px;left:-21.25px;width:300px;text-align:center;"><span id="t93">Расширение склада</span></div>
<div class="t " style="top:279px;font-size:11.7px;color:#111;left:134.5px;width:300px;text-align:center;letter-spacing:-.15px;"><span id="t94">2500</span></div>
<div class="t " style="top:279px;font-size:11.7px;color:#111;left:227.0px;width:300px;text-align:center;letter-spacing:-.15px;"><span id="t95">3200</span></div>
<div class="t " style="top:279px;font-size:11.7px;color:#111;left:310.0px;width:300px;text-align:center;letter-spacing:-.15px;"><span id="t96">3</span></div>
<div class="t " style="top:279px;font-size:11.7px;color:#111;left:419.0px;width:300px;text-align:center;letter-spacing:-.15px;"><span id="t97">200</span></div>
<div class="t " style="top:279px;font-size:11.7px;color:#111;left:574.0px;width:300px;text-align:center;letter-spacing:-.15px;"><span id="t98">12</span></div>
<div class="t " style="top:297px;font-size:11.7px;color:#111;letter-spacing:0.200px;left:-20.75px;width:300px;text-align:center;"><span id="t99">Открытие филиала</span></div>
<div class="t " style="top:297px;font-size:11.7px;color:#111;left:134.5px;width:300px;text-align:center;letter-spacing:-.15px;"><span id="t100">4000</span></div>
<div class="t " style="top:297px;font-size:11.7px;color:#111;left:227.0px;width:300px;text-align:center;letter-spacing:-.15px;"><span id="t101">5500</span></div>
<div class="t " style="top:297px;font-size:11.7px;color:#111;left:310.0px;width:300px;text-align:center;letter-spacing:-.15px;"><span id="t102">4</span></div>
<div class="t " style="top:297px;font-size:11.7px;color:#111;left:419.0px;width:300px;text-align:center;letter-spacing:-.15px;"><span id="t103">350</span></div>
<div class="t " style="top:297px;font-size:11.7px;color:#111;left:574.0px;width:300px;text-align:center;letter-spacing:-.15px;"><span id="t104">12</span></div>
<div class="b" style="left:811px;top:313px;width:1px;height:244px;background:#a6a6a6;"></div>
<svg class="b" style="left:807px;top:309px" width="4" height="4" viewBox="0 0 4 4" ><path d="M3.4 0 V3.4 H0" fill="none" stroke="#2f5597" stroke-width="1.2"/></svg>
<div class="b" style="left:232px;top:473px;width:101px;height:17px;border:2px solid #217346;"></div>
<div class="b" style="left:332px;top:489px;width:5px;height:5px;background:#217346;border:1px solid #fff;box-sizing:content-box;width:4px;height:4px;"></div>
<div class="b" style="left:812px;top:187px;width:19px;height:370px;background:#e6e6e6;"></div>
<div class="b" style="left:815px;top:189px;width:11px;height:11px;background:#fff;border:1px solid #c6c6c6;"></div>
<svg class="b" style="left:818px;top:193px" width="8" height="5" viewBox="0 0 8 5" ><path d="M.3 4.4 H7.3 L3.8 .6Z" fill="#666"/></svg>
<div class="b" style="left:815px;top:202px;width:11px;height:322px;background:#fff;border:1px solid #c6c6c6;"></div>
<div class="b" style="left:815px;top:526px;width:13px;height:17px;background:#d0d0d0;"></div>
<div class="b" style="left:815px;top:543px;width:11px;height:11px;background:#fff;border:1px solid #c6c6c6;"></div>
<svg class="b" style="left:818px;top:548px" width="8" height="5" viewBox="0 0 8 5" ><path d="M.3 .6 H7.3 L3.8 4.4Z" fill="#666"/></svg>
<div class="b" style="left:1px;top:557px;width:830px;height:25px;background:#e6e6e6;"></div>
<div class="b" style="left:1px;top:556px;width:811px;height:1px;background:#ababab;"></div>
<svg class="b" style="left:25px;top:564px" width="6" height="8" viewBox="0 0 6 8" ><path d="M4.6 .8 L1.2 4 L4.6 7.2Z" fill="#c0c0c0"/></svg>
<svg class="b" style="left:50px;top:564px" width="6" height="8" viewBox="0 0 6 8" ><path d="M1.2 .8 L4.6 4 L1.2 7.2Z" fill="#c0c0c0"/></svg>
<div class="b" style="left:91px;top:556px;width:52px;height:22px;background:#fff;border-left:1px solid #ababab;border-right:1px solid #ababab;"></div>
<div class="b" style="left:91px;top:577px;width:54px;height:2px;background:#217346;"></div>
<div class="t " style="top:560px;font-size:11.7px;color:#217346;font-weight:700;letter-spacing:-0.517px;left:102px;"><span id="t105">Лист1</span></div>
<svg class="b" style="left:174px;top:561px" width="15" height="15" viewBox="0 0 15 15" ><circle cx="7.5" cy="7.5" r="6.5" fill="none" stroke="#666" stroke-width="1.2"/><path d="M4.2 7.5 H10.8 M7.5 4.2 V10.8" stroke="#555" stroke-width="1.4"/></svg>
<div class="b" style="left:499.5px;top:564px;width:1.5px;height:1.5px;background:#a4a4a4;"></div>
<div class="b" style="left:499.5px;top:568px;width:1.5px;height:1.5px;background:#a4a4a4;"></div>
<div class="b" style="left:499.5px;top:572px;width:1.5px;height:1.5px;background:#a4a4a4;"></div>
<div class="b" style="left:515px;top:562px;width:11px;height:12px;background:#fff;border:1px solid #c6c6c6;"></div>
<svg class="b" style="left:518px;top:565px" width="6" height="8" viewBox="0 0 6 8" ><path d="M4.8 .4 L.8 4 L4.8 7.6Z" fill="#666"/></svg>
<div class="b" style="left:528px;top:562px;width:235px;height:12px;background:#f2f2f2;border:1px solid #c6c6c6;"></div>
<div class="b" style="left:765px;top:562px;width:33px;height:14px;background:#d0d0d0;"></div>
<div class="b" style="left:799px;top:562px;width:11px;height:12px;background:#fff;border:1px solid #c6c6c6;"></div>
<svg class="b" style="left:803px;top:565px" width="6" height="8" viewBox="0 0 6 8" ><path d="M1 .4 L5 4 L1 7.6Z" fill="#666"/></svg>
<div class="b" style="left:1px;top:582px;width:830px;height:19px;background:#f3f2f1;"></div>
<div class="b" style="left:1px;top:581px;width:830px;height:1px;background:#d8d8d8;"></div>
<div class="t " style="top:584px;font-size:10.3px;color:#555;letter-spacing:0.055px;left:8.7px;"><span id="t106">Готово</span></div>
<svg class="b" style="left:65px;top:585px" width="15" height="13" viewBox="0 0 15 13" ><path d="M1 1.4 H12.6" stroke="#444" stroke-width="1.6"/><path d="M1 1 V11.6 M12.6 1 V4" stroke="#555" stroke-width="1"/>
<path d="M2.6 4.6 H4.6 M2.6 7.2 H4.4 M2.6 9.8 H4.6" stroke="#555" stroke-width="1.1"/>
<circle cx="9" cy="8" r="3.6" fill="#f3f2f1" stroke="#555" stroke-width="1.1"/><circle cx="9" cy="8" r="1.7" fill="#444"/></svg>
<div class="b" style="left:549px;top:582px;width:36px;height:19px;background:#c8c6c4;"></div>
<svg class="b" style="left:560px;top:585px" width="13" height="13" viewBox="0 0 13 13" ><rect x=".5" y=".5" width="12" height="12" fill="none" stroke="#555" stroke-width="1"/><path d="M.5 4.5 H12.5 M.5 8.5 H12.5 M4.5 .5 V12.5 M8.5 .5 V12.5" stroke="#555" stroke-width="1"/></svg>
<svg class="b" style="left:596px;top:585px" width="14" height="13" viewBox="0 0 14 13" ><rect x=".5" y=".5" width="12" height="12" fill="none" stroke="#555" stroke-width="1"/><rect x="3.5" y="2.5" width="6" height="8" fill="none" stroke="#555" stroke-width="1"/><path d="M5 5 H8 M5 7 H8" stroke="#555" stroke-width="1"/></svg>
<svg class="b" style="left:632px;top:585px" width="13" height="13" viewBox="0 0 13 13" ><rect x=".5" y=".5" width="12" height="11" fill="none" stroke="#555" stroke-width="1"/><path d="M4.5 .5 V7.5 H12.5 M8.5 .5 V7.5" fill="none" stroke="#555" stroke-width="1"/></svg>
<div class="b" style="left:663px;top:591px;width:7px;height:1px;background:#555;"></div>
<div class="b" style="left:674px;top:591px;width:89px;height:1px;background:#a0a0a0;"></div>
<div class="b" style="left:717px;top:587px;width:4px;height:10px;background:#555;"></div>
<svg class="b" style="left:767px;top:587px" width="9" height="9" viewBox="0 0 9 9" ><path d="M.5 4.5 H8.5 M4.5 .5 V8.5" stroke="#555" stroke-width="1"/></svg>
<div class="t " style="top:584px;font-size:10.3px;color:#555;letter-spacing:-0.490px;left:787px;"><span id="t107">100 %</span></div>
<div class="b" style="left:0px;top:0px;width:830px;height:600px;border:1px solid #217346;border-radius:8px;"></div>
</div>
</body></html>
